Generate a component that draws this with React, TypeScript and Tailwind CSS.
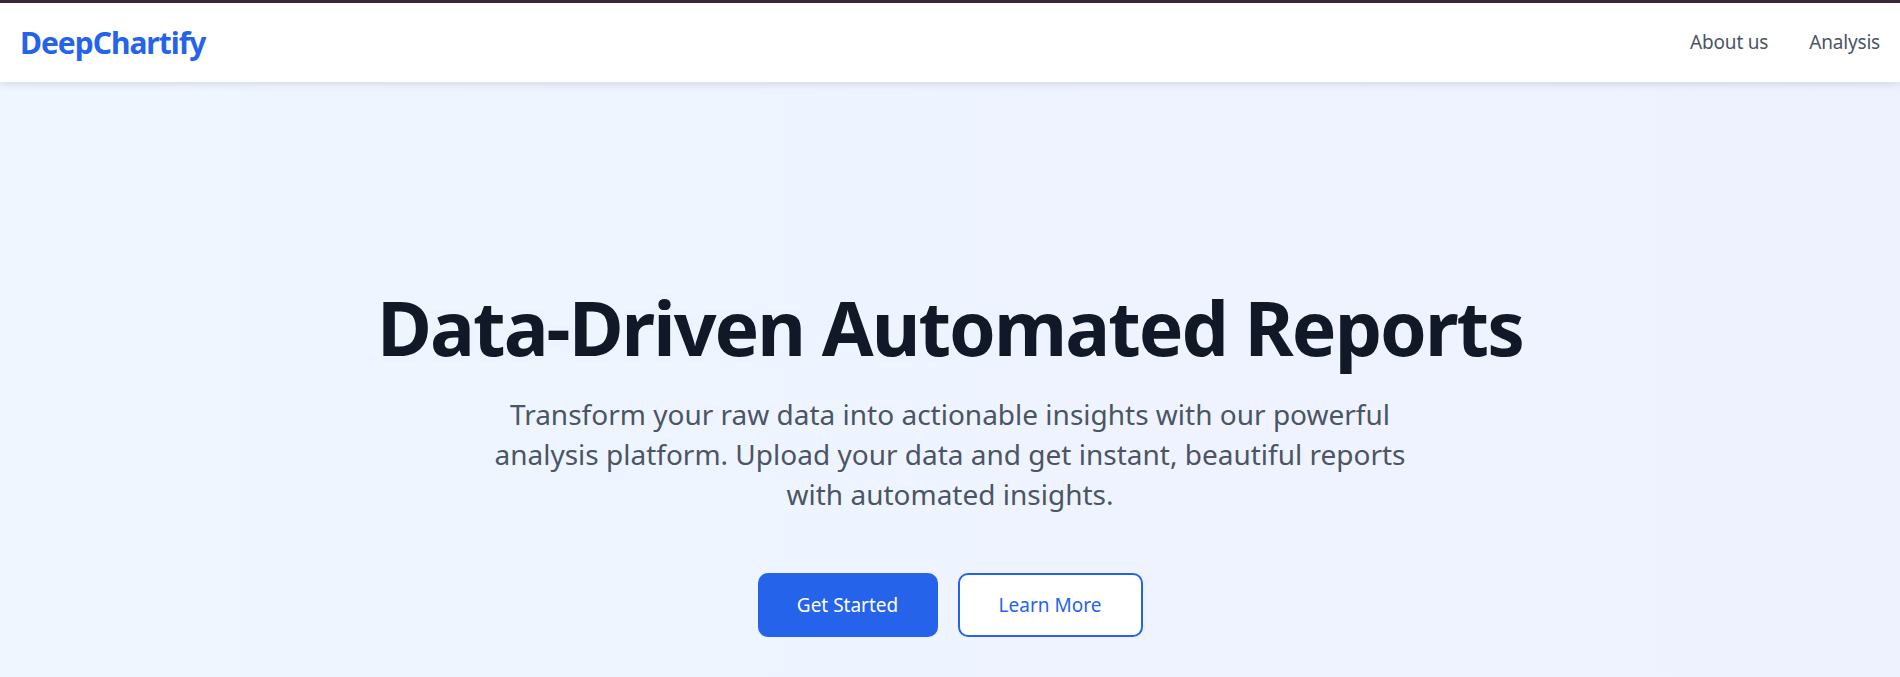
export default function App() {
  return (
    <div className="min-h-[677px] bg-gradient-to-r from-[#eff6ff] to-[#eef2ff] font-['Noto_Sans',sans-serif]">
      <div className="h-[3px] bg-[#3b2a3a]" />

      {/* Navbar */}
      <nav className="relative z-10 flex h-[79px] items-center justify-between bg-white px-5 shadow-[0_2px_8px_rgba(0,0,0,0.12)]">
        <a className="text-[30px] font-bold tracking-[-0.034em] text-[#2563eb]">DeepChartify</a>
        <div className="flex items-center gap-[41px] text-[19px] tracking-[-0.01em] text-[#4b5563]">
          <a>About us</a>
          <a>Analysis</a>
        </div>
      </nav>

      {/* Hero */}
      <section className="flex flex-col items-center pt-[204px] text-center">
        <h1 className="text-[75px] font-bold leading-[82px] tracking-[-0.026em] text-[#111827]">
          Data-Driven Automated Reports
        </h1>
        <p className="mt-[26px] max-w-[960px] text-[28px] leading-[40px] text-[#4b5563]">
          Transform your raw data into actionable insights with our powerful analysis platform. Upload your data and
          get instant, beautiful reports with automated insights.
        </p>
        <div className="mt-[59px] flex gap-5">
          <button className="h-16 w-[180px] rounded-[10px] bg-[#2563eb] text-[19px] text-white">Get Started</button>
          <button className="h-16 w-[185px] rounded-[10px] border-2 border-[#2563eb] bg-white text-[19px] text-[#2563eb]">
            Learn More
          </button>
        </div>
      </section>
    </div>
  );
}
